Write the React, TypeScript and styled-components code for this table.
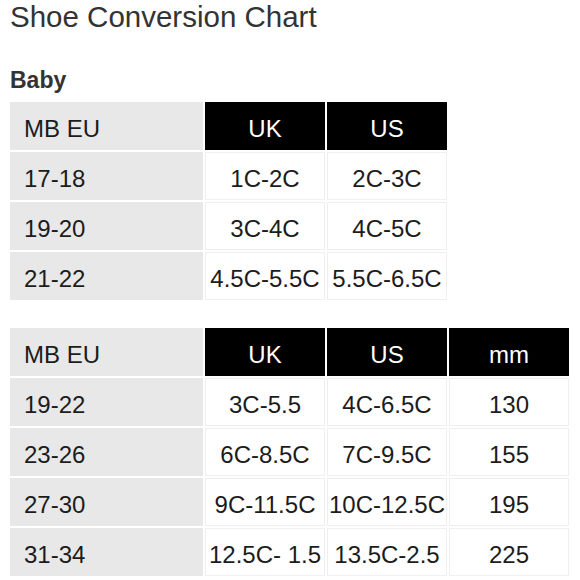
import React from "react";
import styled, { createGlobalStyle } from "styled-components";

const Global = createGlobalStyle`
  html, body {
    margin: 0;
    padding: 0;
    background: #ffffff;
    font-family: "Liberation Sans", Arial, Helvetica, sans-serif;
  }
`;

const Page = styled.div`
  width: 580px;
  height: 580px;
  padding: 0 10px;
  box-sizing: border-box;
  overflow: hidden;
`;

const Title = styled.h1`
  margin: 0;
  font-size: 29.5px;
  line-height: 34px;
  font-weight: normal;
  color: #333333;
`;

const Section = styled.h2`
  margin: 32px 0 8px;
  font-size: 23px;
  line-height: 28px;
  font-weight: bold;
  color: #333333;
`;

const Grid = styled.div<{ $cols: number; $top?: number }>`
  display: grid;
  grid-template-columns: 193px repeat(${(p) => p.$cols}, 120px);
  grid-auto-rows: 48px;
  gap: 2px;
  margin-top: ${(p) => p.$top ?? 0}px;
  background: #ffffff;
  width: max-content;
`;

const Cell = styled.div`
  display: flex;
  align-items: center;
  box-sizing: border-box;
  padding-top: 5px;
  font-size: 24px;
  white-space: nowrap;
  color: #1c1c1c;
`;

const LabelCell = styled(Cell)`
  background: #e8e8e8;
  padding-left: 14px;
`;

const HeadCell = styled(Cell)`
  background: #000000;
  color: #ffffff;
  justify-content: center;
`;

const DataCell = styled(Cell)`
  background: #ffffff;
  border: 1px solid #efefef;
  justify-content: center;
`;

type TableProps = { heads: string[]; rows: string[][]; top?: number };

const SizeTable = ({ heads, rows, top }: TableProps) => (
  <Grid $cols={heads.length} $top={top}>
    <LabelCell>MB EU</LabelCell>
    {heads.map((h) => (
      <HeadCell key={h}>{h}</HeadCell>
    ))}
    {rows.map((r) => (
      <React.Fragment key={r[0]}>
        <LabelCell>{r[0]}</LabelCell>
        {r.slice(1).map((v, i) => (
          <DataCell key={i}>{v}</DataCell>
        ))}
      </React.Fragment>
    ))}
  </Grid>
);

export default function App() {
  return (
    <Page>
      <Global />
      <Title>Shoe Conversion Chart</Title>
      <Section>Baby</Section>
      <SizeTable
        heads={["UK", "US"]}
        rows={[
          ["17-18", "1C-2C", "2C-3C"],
          ["19-20", "3C-4C", "4C-5C"],
          ["21-22", "4.5C-5.5C", "5.5C-6.5C"],
        ]}
      />
      <SizeTable
        top={28}
        heads={["UK", "US", "mm"]}
        rows={[
          ["19-22", "3C-5.5", "4C-6.5C", "130"],
          ["23-26", "6C-8.5C", "7C-9.5C", "155"],
          ["27-30", "9C-11.5C", "10C-12.5C", "195"],
          ["31-34", "12.5C- 1.5", "13.5C-2.5", "225"],
        ]}
      />
    </Page>
  );
}
